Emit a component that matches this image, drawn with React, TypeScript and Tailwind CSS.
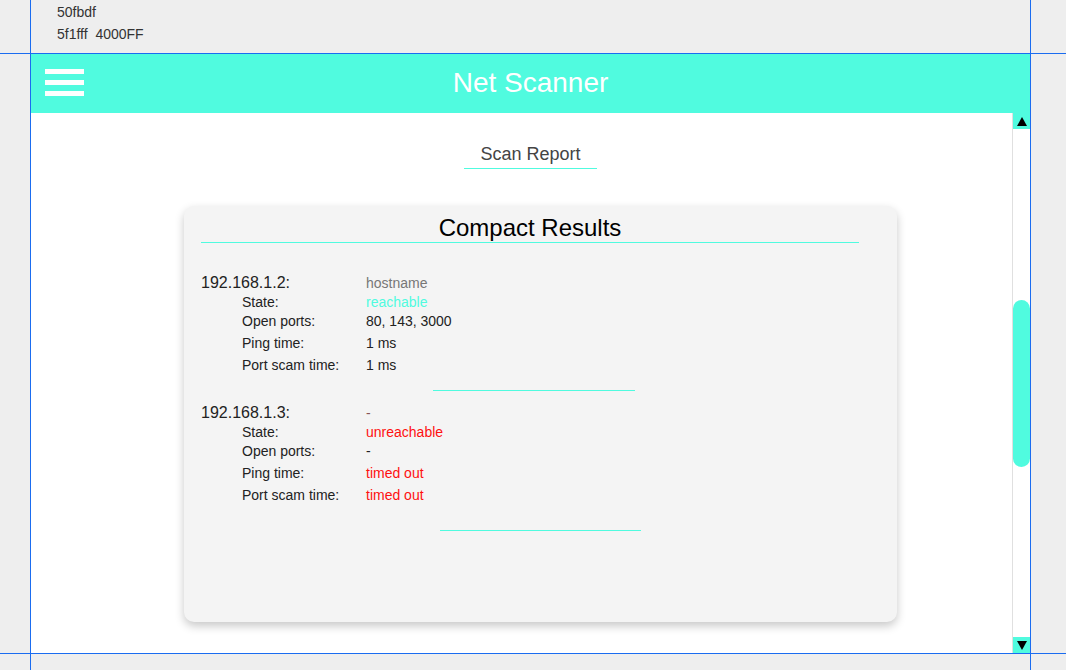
const font = { fontFamily: '"Liberation Sans", Arial, sans-serif' };

type Host = {
  ip: string;
  name: string;
  nameClass: string;
  state: string;
  stateClass: string;
  ports: string;
  ping: string;
  scan: string;
  timeClass: string;
};

const hosts: Host[] = [
  {
    ip: '192.168.1.2:',
    name: 'hostname',
    nameClass: 'text-[#777777]',
    state: 'reachable',
    stateClass: 'text-[#50fbdf]',
    ports: '80, 143, 3000',
    ping: '1 ms',
    scan: '1 ms',
    timeClass: 'text-[#222222]',
  },
  {
    ip: '192.168.1.3:',
    name: '-',
    nameClass: 'text-[#885555]',
    state: 'unreachable',
    stateClass: 'text-[#ff1010]',
    ports: '-',
    ping: 'timed out',
    scan: 'timed out',
    timeClass: 'text-[#ff1010]',
  },
];

const Row = ({ label, value, h, valueClass }: { label: string; value: string; h: string; valueClass: string }) => (
  <div className={`flex items-center text-[14px] ${h}`}>
    <span className="w-[165px] pl-[41px] text-[#222222]">{label}</span>
    <span className={valueClass}>{value}</span>
  </div>
);

const HostBlock = ({ host, second }: { host: Host; second?: boolean }) => (
  <div className={second ? 'mt-[12px]' : 'mt-[30px]'}>
    <div className="flex items-center h-[20px]">
      <span className="w-[165px] text-[16px] text-[#222222]">{host.ip}</span>
      <span className={`text-[14px] ${host.nameClass}`}>{host.name}</span>
    </div>
    <Row label="State:" value={host.state} h="h-[19px]" valueClass={host.stateClass} />
    <Row label="Open ports:" value={host.ports} h="h-[19px]" valueClass="text-[#222222]" />
    <Row label="Ping time:" value={host.ping} h="h-[24px]" valueClass={host.timeClass} />
    <Row label="Port scam time:" value={host.scan} h="h-[21px]" valueClass={host.timeClass} />
    <div
      className={`h-px bg-[#50fbdf] ${
        second ? 'mt-[24px] ml-[239px] w-[201px]' : 'mt-[14px] ml-[232px] w-[202px]'
      }`}
    />
  </div>
);

const Scrollbar = () => (
  <div className="absolute right-0 top-0 bottom-0 w-[18px] flex flex-col bg-white border-l border-[#e0e0e0]">
    <div className="h-[16px] bg-[#50fbdf] flex items-center justify-center">
      <div className="w-0 h-0 border-l-[5px] border-r-[5px] border-b-[9px] border-l-transparent border-r-transparent border-b-black" />
    </div>
    <div className="flex-1 relative">
      <div className="absolute left-0 right-0 top-[171px] h-[167px] rounded-full bg-[#50fbdf]" />
    </div>
    <div className="h-[16px] bg-[#50fbdf] flex items-center justify-center">
      <div className="w-0 h-0 border-l-[5px] border-r-[5px] border-t-[9px] border-l-transparent border-r-transparent border-t-black" />
    </div>
  </div>
);

export default function App() {
  return (
    <div className="relative w-full h-[670px] bg-[#eeeeee] overflow-hidden" style={font}>
      <div className="h-[53px] pl-[57px] pt-[3px] text-[14px] text-[#333333] leading-[18px]">
        <div>50fbdf</div>
        <div className="mt-[4px] whitespace-pre">5f1fff  4000FF</div>
      </div>

      <div className="mt-px ml-[31px] w-[999px] h-[599px] flex flex-col bg-white">
        <header className="h-[59px] bg-[#50fbdf] flex items-center relative">
          <div className="absolute left-[14px] top-[15px] flex flex-col gap-[6px]">
            <span className="block w-[39px] h-[5px] bg-white" />
            <span className="block w-[39px] h-[5px] bg-white" />
            <span className="block w-[39px] h-[5px] bg-white" />
          </div>
          <h1 className="w-full text-center text-[28px] text-white leading-none -mt-[2px]">Net Scanner</h1>
        </header>

        <main className="flex-1 relative">
          <div className="pt-[29px] flex justify-center">
            <div className="w-[133px] text-center text-[18px] text-[#444444] leading-[24px] pb-[2px] border-b border-[#50fbdf]">
              Scan Report
            </div>
          </div>

          <div className="mt-[37px] ml-[153px] w-[713px] h-[416px] bg-[#f4f4f4] rounded-[10px] shadow-[0_4px_10px_rgba(0,0,0,0.22)] pl-[17px]">
            <div className="w-[658px] pt-[7px] border-b border-[#50fbdf] text-center text-[24px] leading-[29px] text-black">
              Compact Results
            </div>
            {hosts.map((h, i) => (
              <HostBlock key={h.ip} host={h} second={i === 1} />
            ))}
          </div>

          <Scrollbar />
        </main>
      </div>

      <div className="absolute left-[30px] top-0 bottom-0 w-px bg-[#1a6cf0]" />
      <div className="absolute left-[1030px] top-0 bottom-0 w-px bg-[#1a6cf0]" />
      <div className="absolute top-[53px] left-0 right-0 h-px bg-[#1a6cf0]" />
      <div className="absolute top-[653px] left-0 right-0 h-px bg-[#1a6cf0]" />
    </div>
  );
}
